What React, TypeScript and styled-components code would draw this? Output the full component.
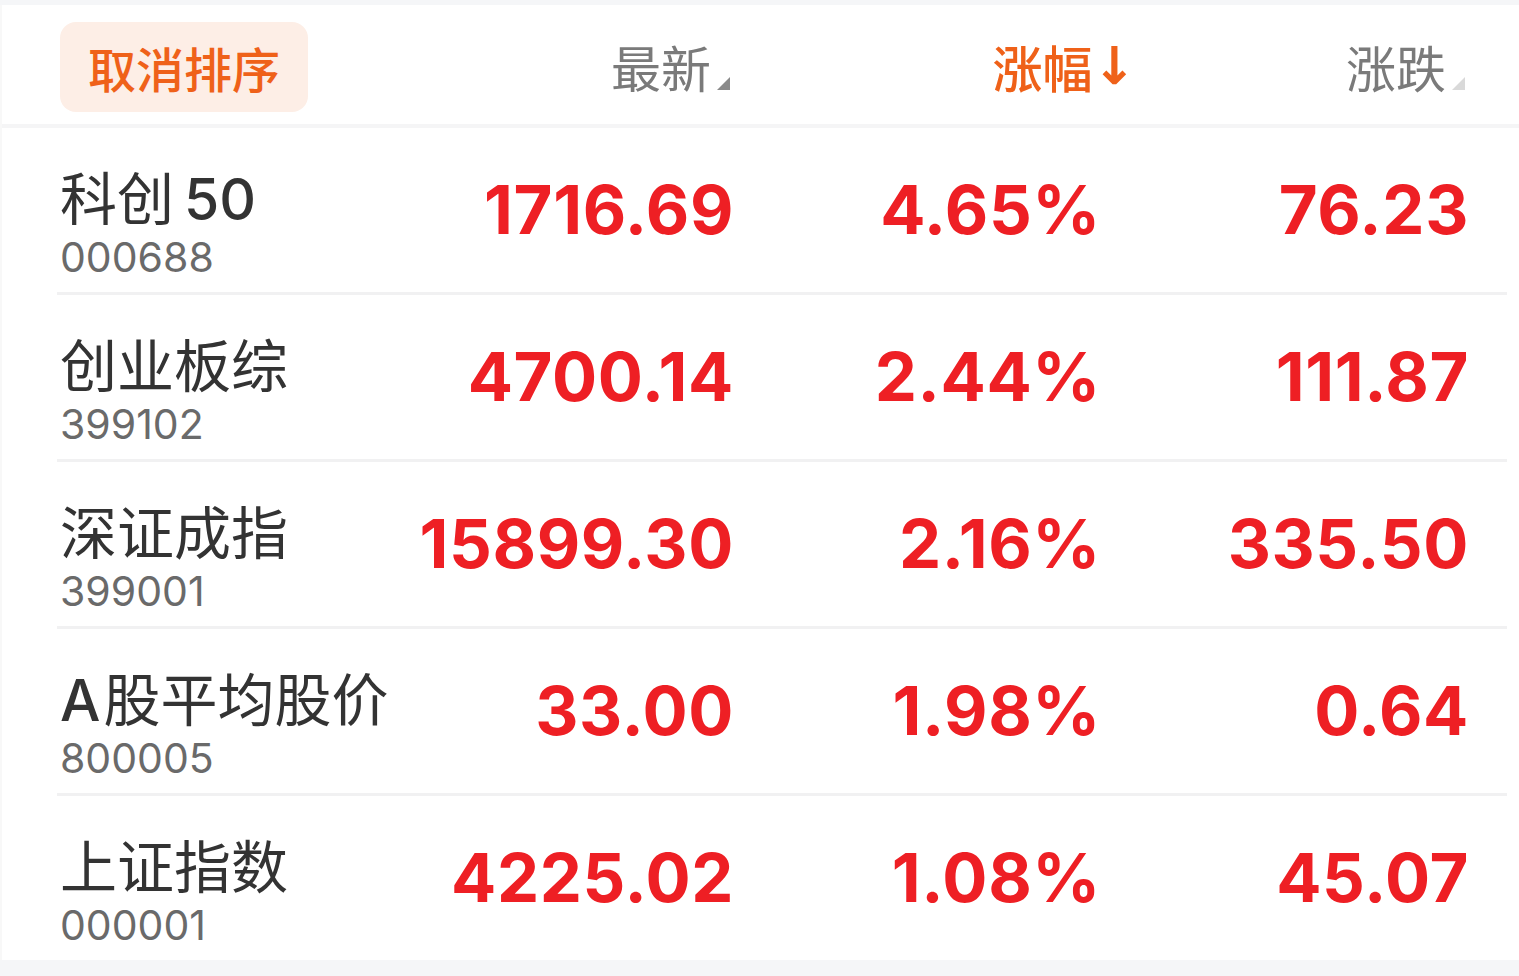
import React from "react";
import styled, { createGlobalStyle } from "styled-components";

const Global = createGlobalStyle`
  html, body { margin: 0; padding: 0; background: #f5f6f8; }
  body { font-family: "Inter", "Noto Sans CJK SC", sans-serif; }
`;

const Page = styled.div`
  width: 1519px;
  min-height: 976px;
  background: #f5f6f8;
  padding-top: 5px;
  box-sizing: border-box;
`;

const Panel = styled.div`
  background: #ffffff;
  border-left: 2px solid #f8f8f8;
`;

const COLS = "340px 330px 367px 368px";

const HeaderRow = styled.div`
  display: grid;
  grid-template-columns: ${COLS};
  padding-left: 58px;
  height: 119px;
  align-items: center;
  border-bottom: 4px solid #f5f5f6;
`;

const CancelButton = styled.button`
  width: 248px;
  height: 90px;
  border: none;
  border-radius: 16px;
  background: #fdeee6;
  color: #ef6119;
  font-family: "Noto Sans CJK SC", sans-serif;
  font-size: 48px;
  font-weight: 500;
  padding: 0;
  justify-self: start;
  margin-top: 5px;
`;

const HeadCell = styled.div<{ $shift?: number; $active?: boolean }>`
  justify-self: end;
  display: flex;
  align-items: flex-end;
  margin-right: ${(p) => -(p.$shift ?? 0)}px;
  color: ${(p) => (p.$active ? "#ef6119" : "#7a7a7a")};
  font-family: "Noto Sans CJK SC", sans-serif;
  font-size: 50px;
  font-weight: ${(p) => (p.$active ? 500 : 400)};
  line-height: 60px;
  margin-top: 2px;
`;

const Arrow = styled.span`
  font-family: "DejaVu Sans", sans-serif;
  font-weight: 700;
  font-size: 52px;
  line-height: 60px;
`;

const Corner = styled.span<{ $light?: boolean }>`
  width: 0;
  height: 0;
  margin-left: 6px;
  margin-bottom: 6px;
  border-left: 13px solid transparent;
  border-bottom: 13px solid ${(p) => (p.$light ? "#d9d9d9" : "#8a8a8a")};
`;

const Row = styled.div`
  display: grid;
  grid-template-columns: ${COLS};
  padding-left: 58px;
  height: 164px;
  align-items: center;
`;

const Sep = styled.div`
  height: 3px;
  background: #f1f1f2;
  margin-left: 55px;
  margin-right: 12px;
`;

const NameCell = styled.div`
  display: flex;
  flex-direction: column;
  padding-top: 26px;
`;

const Name = styled.div`
  font-family: "Inter", "Noto Sans CJK SC", sans-serif;
  font-size: 57px;
  line-height: 68px;
  color: #333333;
  white-space: nowrap;
`;

const Latin = styled.span<{ $gap?: boolean }>`
  font-weight: 500;
  margin-left: ${(p) => (p.$gap ? 10 : 0)}px;
  margin-right: ${(p) => (p.$gap ? 0 : 3)}px;
`;

const Code = styled.div`
  font-family: "Inter", sans-serif;
  font-size: 41px;
  line-height: 46px;
  color: #6a6a6a;
`;

const Num = styled.div`
  justify-self: end;
  margin-right: -4px;
  font-family: "Inter", sans-serif;
  font-weight: 700;
  font-size: 67px;
  letter-spacing: 0.6px;
  line-height: 80px;
  color: #ee1f24;
  white-space: nowrap;
`;

type Item = {
  prefix?: string;
  name: string;
  suffix?: string;
  code: string;
  last: string;
  pct: string;
  chg: string;
};

const data: Item[] = [
  { name: "科创", suffix: "50", code: "000688", last: "1716.69", pct: "4.65%", chg: "76.23" },
  { name: "创业板综", code: "399102", last: "4700.14", pct: "2.44%", chg: "111.87" },
  { name: "深证成指", code: "399001", last: "15899.30", pct: "2.16%", chg: "335.50" },
  { prefix: "A", name: "股平均股价", code: "800005", last: "33.00", pct: "1.98%", chg: "0.64" },
  { name: "上证指数", code: "000001", last: "4225.02", pct: "1.08%", chg: "45.07" },
];

export default function App() {
  return (
    <Page>
      <Global />
      <Panel>
        <HeaderRow>
          <CancelButton>取消排序</CancelButton>
          <HeadCell>
            最新
            <Corner />
          </HeadCell>
          <HeadCell $active $shift={39}>
            涨幅<Arrow>↓</Arrow>
          </HeadCell>
          <HeadCell>
            涨跌
            <Corner $light />
          </HeadCell>
        </HeaderRow>
        {data.map((d, i) => (
          <React.Fragment key={d.code}>
            <Row>
              <NameCell>
                <Name>
                  {d.prefix && <Latin>{d.prefix}</Latin>}
                  {d.name}
                  {d.suffix && <Latin $gap>{d.suffix}</Latin>}
                </Name>
                <Code>{d.code}</Code>
              </NameCell>
              <Num>{d.last}</Num>
              <Num>{d.pct}</Num>
              <Num>{d.chg}</Num>
            </Row>
            {i < data.length - 1 && <Sep />}
          </React.Fragment>
        ))}
      </Panel>
    </Page>
  );
}
